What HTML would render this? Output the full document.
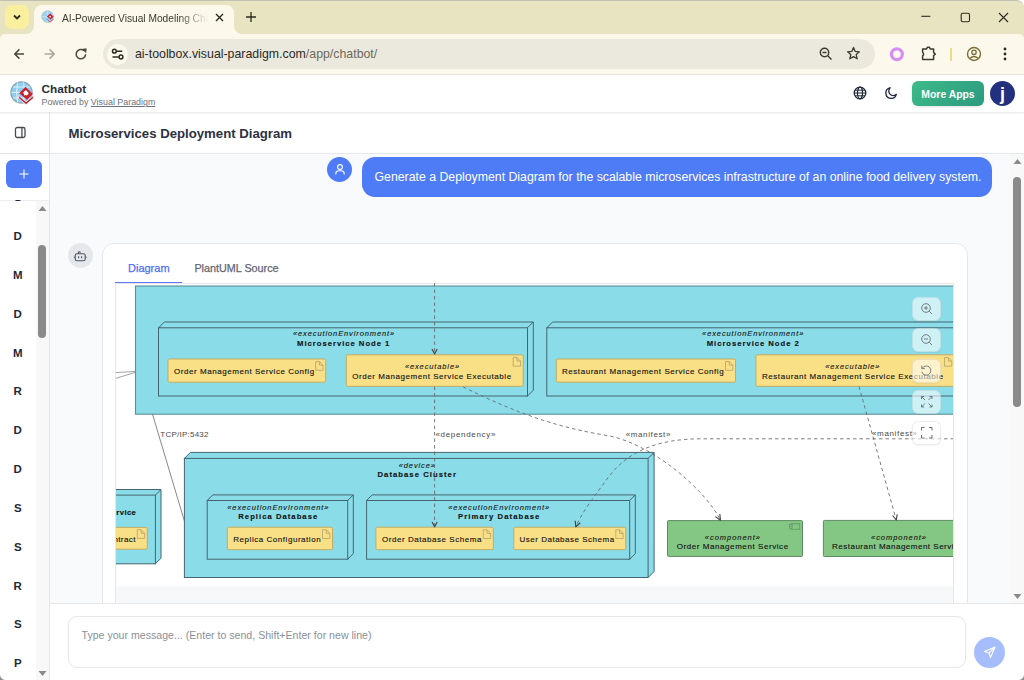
<!DOCTYPE html>
<html><head><meta charset="utf-8">
<style>
*{box-sizing:border-box;margin:0;padding:0}
html,body{width:1024px;height:680px;overflow:hidden;background:#fff;font-family:"Liberation Sans",sans-serif}
.abs{position:absolute}
#tabstrip{left:0;top:0;width:1024px;height:34px;background:#e8e4c2;border-top:1px solid #c2c0b2;border-radius:0 8px 0 0}
#toolbar{left:0;top:34px;width:1024px;height:41px;background:#fcf9ec;border-bottom:1px solid #e5e2d3;border-radius:5px 5px 0 0}
#apphdr{left:0;top:75px;width:1024px;height:37px;background:#fff;box-shadow:0 1px 2px rgba(0,0,0,.10);z-index:3}
#sidebar{left:0;top:112px;width:50px;height:568px;background:#fff;border-right:1px solid #e5e7eb}
#main{left:50px;top:112px;width:974px;height:491px;background:#f9fafb}
#titlebar{left:50px;top:112px;width:974px;height:42px;background:#fff;border-bottom:1px solid #e5e7eb}
#inputbar{left:50px;top:603px;width:974px;height:77px;background:#fff;border-top:1px solid #e5e7eb}
.letter{position:absolute;left:0;width:35.5px;text-align:center;font-weight:bold;font-size:11.5px;line-height:11.5px;color:#1f2937}
</style></head><body>

<!-- TAB STRIP -->
<div id="tabstrip" class="abs"></div>
<div class="abs" style="left:5px;top:5px;width:24px;height:24px;border-radius:7px;background:#f9ef9f"></div>
<svg class="abs" style="left:11px;top:11px" width="12" height="12" viewBox="0 0 12 12"><path d="M3 4.5 L6 7.5 L9 4.5" fill="none" stroke="#2b2a1f" stroke-width="1.8"/></svg>
<div class="abs" style="left:34px;top:5px;width:200px;height:30px;background:#fcf9ec;border-radius:8px 8px 0 0"></div>
<div class="abs" style="left:26px;top:26px;width:8px;height:9px;background:#fcf9ec"></div>
<div class="abs" style="left:26px;top:26px;width:8px;height:8px;border-radius:0 0 8px 0;background:#e8e4c2"></div>
<div class="abs" style="left:234px;top:26px;width:8px;height:9px;background:#fcf9ec"></div>
<div class="abs" style="left:234px;top:26px;width:8px;height:8px;border-radius:0 0 0 8px;background:#e8e4c2"></div>
<!-- favicon -->
<svg class="abs" style="left:40px;top:9px" width="16" height="16" viewBox="40 9 16 16"><circle cx="47.6" cy="16.6" r="5.8" fill="#9bd3f3" stroke="#a9bcc6" stroke-width=".8"/><path d="M42.3 16.6 H52.9 M47.6 11 V22.2" stroke="#d9eefa" stroke-width=".6"/><path d="M50.2,13.4 L53.6,16.8 L50.6,19.6 L46.8,16.6 Z" fill="#c8202f"/><path d="M46.8,18.4 L50.2,21.6 L53.6,18.4 L53.6,19.6 L50.2,22.6 L46.8,19.6 Z" fill="#d84a55"/><circle cx="50.1" cy="16.6" r=".9" fill="#fff"/></svg>
<div class="abs" style="left:62px;top:13.9px;width:146px;height:14px;font-size:10.2px;line-height:10.2px;color:#3b3a2f;white-space:nowrap;overflow:hidden;-webkit-mask-image:linear-gradient(90deg,#000 80%,transparent 100%)">AI-Powered Visual Modeling Chatbot</div>
<svg class="abs" style="left:214px;top:12px" width="11" height="11" viewBox="0 0 11 11"><path d="M2 2 L9 9 M9 2 L2 9" stroke="#2b2a1f" stroke-width="1.4"/></svg>
<svg class="abs" style="left:245px;top:11px" width="12" height="12" viewBox="0 0 12 12"><path d="M6 1 V11 M1 6 H11" stroke="#2b2a1f" stroke-width="1.3"/></svg>
<!-- window controls -->
<svg class="abs" style="left:919.5px;top:10px" width="12" height="12" viewBox="0 0 12 12"><path d="M1.3 6.3 H10.3" stroke="#2b2a1f" stroke-width="1.1"/></svg>
<svg class="abs" style="left:959.5px;top:12px" width="11" height="11" viewBox="0 0 11 11"><rect x="1.2" y="1.2" width="8.3" height="8.6" rx="1.5" fill="none" stroke="#2b2a1f" stroke-width="1.1"/></svg>
<svg class="abs" style="left:998px;top:12px" width="11" height="11" viewBox="0 0 11 11"><path d="M1 1 L10 10 M10 1 L1 10" stroke="#2b2a1f" stroke-width="1.1"/></svg>

<!-- TOOLBAR -->
<div class="abs" style="left:0;top:34px;width:1024px;height:6px;background:#e8e4c2"></div>
<div class="abs" style="left:26px;top:34px;width:216px;height:6px;background:#fcf9ec"></div>
<div id="toolbar" class="abs"></div>
<svg class="abs" style="left:10px;top:44px" width="50" height="20" viewBox="10 44 50 20"><path d="M24 54 H15 M19.4 49.4 L14.8 54 L19.4 58.6" fill="none" stroke="#4a4a38" stroke-width="1.5"/><path d="M44.6 54 H54 M49.6 49.4 L54.2 54 L49.6 58.6" fill="none" stroke="#aaa897" stroke-width="1.5"/></svg>

<svg class="abs" style="left:72px;top:44px" width="20" height="20" viewBox="72 44 20 20"><path d="M85.6 54.3 A4.7 4.7 0 1 1 84 50.6" fill="none" stroke="#4a4a38" stroke-width="1.5"/><path d="M82.6 49.2 L86.2 48.8 L85.8 52.6 Z" fill="#4a4a38" stroke="#4a4a38" stroke-width=".8" stroke-linejoin="round"/></svg>
<div class="abs" style="left:103px;top:39px;width:772px;height:30px;border-radius:15px;background:#ebe8de"></div>
<div class="abs" style="left:107px;top:44px;width:21px;height:21px;border-radius:50%;background:#fcf9ec"></div>
<svg class="abs" style="left:107px;top:44px" width="21" height="21" viewBox="107 44 21 21"><circle cx="114.4" cy="51.2" r="1.9" fill="none" stroke="#2e2d24" stroke-width="1.5"/><path d="M117 51.2 H122.3 M112.5 57 H118.8" stroke="#2e2d24" stroke-width="1.5"/><circle cx="121" cy="57" r="1.9" fill="none" stroke="#2e2d24" stroke-width="1.5"/></svg>
<div class="abs" style="left:135px;top:48.35px;font-size:12.35px;line-height:12.35px;color:#2b2a1f;white-space:nowrap">ai-toolbox.visual-paradigm.com<span style="color:#6c6a5c">/app/chatbot/</span></div>
<svg class="abs" style="left:819px;top:47px" width="14" height="14" viewBox="0 0 14 14"><circle cx="5.5" cy="5.5" r="4.2" fill="none" stroke="#3b3a2f" stroke-width="1.4"/><path d="M3.5 5.5 H7.5 M8.7 8.7 L12.5 12.5" stroke="#3b3a2f" stroke-width="1.4"/></svg>
<svg class="abs" style="left:846px;top:46px" width="15" height="15" viewBox="0 0 15 15"><path d="M7.5 1.5 L9.2 5.4 L13.4 5.8 L10.2 8.6 L11.2 12.8 L7.5 10.6 L3.8 12.8 L4.8 8.6 L1.6 5.8 L5.8 5.4Z" fill="none" stroke="#3b3a2f" stroke-width="1.3" stroke-linejoin="round"/></svg>
<svg class="abs" style="left:886px;top:44px" width="22" height="22" viewBox="886 44 22 22"><circle cx="896.9" cy="54.2" r="5.4" fill="none" stroke="#d68ef2" stroke-width="3.3"/></svg>
<svg class="abs" style="left:918px;top:44px" width="22" height="20" viewBox="918 44 22 20"><path d="M922.6,49 H926.4 L927.6,47.2 H929.2 L930.4,49 H933.6 V52.6 L935.4,54 L933.6,55.6 V59.4 H922.6 V55.9 Q924.6,54.2 922.6,52.3 Z" fill="none" stroke="#3b3a2f" stroke-width="1.5" stroke-linejoin="round"/></svg>
<div class="abs" style="left:950.2px;top:47.5px;width:1.6px;height:13.3px;background:#ebdc8a"></div>
<svg class="abs" style="left:966px;top:46px" width="16" height="16" viewBox="0 0 16 16"><circle cx="8" cy="8" r="6.5" fill="none" stroke="#7a6e33" stroke-width="1.4"/><circle cx="8" cy="6.3" r="2.2" fill="none" stroke="#7a6e33" stroke-width="1.3"/><path d="M4 12.3 Q8 8.8 12 12.3" fill="none" stroke="#7a6e33" stroke-width="1.3"/></svg>
<svg class="abs" style="left:1002px;top:46px" width="6" height="16" viewBox="0 0 6 16"><circle cx="3" cy="3" r="1.4" fill="#2b2a1f"/><circle cx="3" cy="8" r="1.4" fill="#2b2a1f"/><circle cx="3" cy="13" r="1.4" fill="#2b2a1f"/></svg>

<!-- APP HEADER -->
<div id="apphdr" class="abs">
  <svg class="abs" style="left:-75px;top:-75px" width="150" height="150" viewBox="0 0 150 150"><g transform="translate(75,0)"><circle cx="21.5" cy="92.5" r="10.6" fill="#8fcdf2" stroke="#8da7b3" stroke-width="1.3"/><path d="M11.5 92.5 H31.5 M13 87 H30 M13 98 H30 M17.6 82.5 Q15.5 92.5 17.6 102.5 M23.5 82.2 Q25.8 92.5 23.5 102.8" fill="none" stroke="#e6f4fc" stroke-width=".9"/><path d="M25.5,86.8 L32.8,94 L27,99.8 L19.2,93.2 Z" fill="#c8202f"/><path d="M18.6,95.4 L26,101.9 L33.4,95.4 L33.4,98.3 L26,104.6 L18.6,98.3 Z" fill="#c8202f" stroke="#fff" stroke-width=".7"/><path d="M23.2,92.6 L25.8,90 L28.3,92.5 Q29,93.5 28,94.4 L26.6,95.6 L25.6,94.8 L24.6,95.8 Z" fill="#fff"/></g></svg>
  <div class="abs" style="left:41.5px;top:9px;font-size:11.8px;line-height:11.8px;font-weight:bold;color:#2a2f3d">Chatbot</div>
  <div class="abs" style="left:41.5px;top:23.3px;font-size:8.9px;line-height:8.9px;color:#6b7280;white-space:nowrap">Powered by <span style="text-decoration:underline">Visual Paradigm</span></div>
  <svg class="abs" style="left:853px;top:11px" width="14" height="14" viewBox="0 0 14 14"><circle cx="7" cy="7" r="5.8" fill="none" stroke="#1f2937" stroke-width="1.3"/><ellipse cx="7" cy="7" rx="2.5" ry="5.8" fill="none" stroke="#1f2937" stroke-width="1.2"/><path d="M1.2 7 H12.8 M2 4.2 H12 M2 9.8 H12" stroke="#1f2937" stroke-width="1"/></svg>
  <svg class="abs" style="left:884px;top:11px" width="14" height="14" viewBox="0 0 14 14"><path d="M6.2 1.8 A5.3 5.3 0 1 0 12.3 8.3 A4.3 4.3 0 0 1 6.2 1.8Z" fill="none" stroke="#1f2937" stroke-width="1.3" stroke-linejoin="round"/></svg>
  <div class="abs" style="left:912px;top:6px;width:72px;height:25px;border-radius:6px;background:linear-gradient(135deg,#3dbb88,#2c9a80);box-shadow:0 1px 3px rgba(0,0,0,.12);color:#fff;font-size:10.4px;font-weight:bold;text-align:center;line-height:27px;letter-spacing:0">More Apps</div>
  <div class="abs" style="left:990px;top:6px;width:25px;height:25px;border-radius:50%;background:#23307e;color:#fff;font-size:18px;font-weight:bold;text-align:center;line-height:27px">j</div>
</div>

<!-- SIDEBAR -->
<div id="sidebar" class="abs"></div>
<svg class="abs" style="left:13.5px;top:126.3px" width="13" height="13" viewBox="0 0 13 13"><rect x="1.5" y="1.5" width="9.5" height="10" rx="1.8" fill="none" stroke="#474b52" stroke-width="1.3"/><path d="M7.9 1.5 V11.5" stroke="#474b52" stroke-width="1.3"/></svg>
<div class="abs" style="left:0;top:153px;width:49px;height:1px;background:#e5e7eb"></div>
<div class="abs" style="left:6px;top:160px;width:36px;height:28px;border-radius:6px;background:#4f7cf6"></div>
<svg class="abs" style="left:18px;top:168px" width="12" height="12" viewBox="0 0 12 12"><path d="M6 1.5 V10.5 M1.5 6 H10.5" stroke="#fff" stroke-width="1.1"/></svg>
<div class="abs" style="left:0;top:200px;width:49px;height:1px;background:#eceef1"></div>
<div class="abs" style="left:0;top:200px;width:36px;height:480px;overflow:hidden">
  <div class="letter" style="top:-7.88px">S</div>
  <div class="letter" style="top:30.97px">D</div>
  <div class="letter" style="top:69.82px">M</div>
  <div class="letter" style="top:108.67px">D</div>
  <div class="letter" style="top:147.52px">M</div>
  <div class="letter" style="top:186.37px">R</div>
  <div class="letter" style="top:225.22px">D</div>
  <div class="letter" style="top:264.07px">D</div>
  <div class="letter" style="top:302.92px">S</div>
  <div class="letter" style="top:341.77px">S</div>
  <div class="letter" style="top:380.62px">R</div>
  <div class="letter" style="top:419.47px">S</div>
  <div class="letter" style="top:458.32px">P</div>
</div>
<div class="abs" style="left:36px;top:201px;width:13px;height:479px;background:#f8f8f8"></div>
<svg class="abs" style="left:37px;top:204px" width="11" height="8" viewBox="0 0 11 8"><path d="M1.5 7 L5.5 2 L9.5 7Z" fill="#8a8a8a"/></svg>
<div class="abs" style="left:38px;top:245px;width:8px;height:93px;border-radius:4px;background:#8a8a8a"></div>
<svg class="abs" style="left:37px;top:669.5px" width="11" height="8" viewBox="0 0 11 8"><path d="M1.5 1 L5.5 6 L9.5 1Z" fill="#8a8a8a"/></svg>

<!-- MAIN -->
<div id="main" class="abs"></div>
<div id="titlebar" class="abs"><div class="abs" style="left:18.5px;top:14.9px;font-size:13.2px;line-height:13.2px;font-weight:bold;color:#2d3142;white-space:nowrap">Microservices Deployment Diagram</div></div>

<!-- user message -->
<div class="abs" style="left:327px;top:157px;width:25px;height:25px;border-radius:50%;background:#4f7cf6"></div>
<svg class="abs" style="left:334px;top:163px" width="12" height="13" viewBox="0 0 12 13"><circle cx="6" cy="4" r="2.4" fill="none" stroke="#fff" stroke-width="1.1"/><path d="M1.8 11.5 V10.5 A3 3 0 0 1 4.8 7.8 H7.2 A3 3 0 0 1 10.2 10.5 V11.5" fill="none" stroke="#fff" stroke-width="1.1"/></svg>
<div class="abs" style="left:362px;top:157px;width:630px;height:40px;border-radius:13px;background:#4e7bf6;color:#fff;font-size:12.3px;line-height:40px;padding-left:12.5px;white-space:nowrap">Generate a Deployment Diagram for the scalable microservices infrastructure of an online food delivery system.</div>

<!-- bot avatar -->
<div class="abs" style="left:68px;top:243px;width:25px;height:25px;border-radius:50%;background:#e5e7eb"></div>
<svg class="abs" style="left:68px;top:243px" width="25" height="25" viewBox="68 243 25 25"><rect x="75.2" y="253.8" width="10" height="6.9" rx="1.8" fill="none" stroke="#4b5563" stroke-width="1.1"/><path d="M78.3 253.8 V252.6 Q78.6 251.6 79.6 251.8 L80.6 252.6 M78.6 256.2 V258.2 M81.6 256.2 V258.2 M73.8 257.2 H75.2 M85.2 257.2 H86.6" fill="none" stroke="#4b5563" stroke-width="1.1"/></svg>

<!-- card -->
<div class="abs" style="left:102px;top:243px;width:866px;height:400px;border-radius:12px;background:#fff;border:1px solid #e5e7eb"></div>
<div class="abs" style="left:128px;top:263.2px;font-size:11px;line-height:11px;color:#4f6ef7;-webkit-text-stroke:.25px #4f6ef7">Diagram</div>
<div class="abs" style="left:194.4px;top:263.4px;font-size:10.8px;line-height:10.8px;color:#5f6673;-webkit-text-stroke:.25px #5f6673">PlantUML Source</div>
<div class="abs" style="left:115px;top:281.5px;width:67px;height:1.6px;background:#5b78f7"></div>
<div class="abs" style="left:115px;top:283px;width:839px;height:330px;background:#f7f8fa;border-left:1px solid #e5e7eb;border-right:1px solid #e5e7eb"></div>
<div id="diagram" class="abs" style="left:116px;top:283px;width:837px;height:303px;background:#fff;overflow:hidden"></div>
<svg class="abs" style="left:116px;top:283px" width="837" height="303" viewBox="116 283 837 303" font-family="Liberation Sans, sans-serif"><rect x="135.5" y="286" width="900" height="128.2" fill="#8adde8" stroke="#5a8f9a" stroke-width="1.1"/>
<rect x="116" y="283" width="837" height="1" fill="#e5e7eb"/>
<path d="M116,372.6 L135.5,371.4 M116,378.3 L135.5,372.3" stroke="#8c8c8c" stroke-width=".8" fill="none"/>
<path d="M158.5,327.8 L164.3,322.0 L533.3,322.0 L533.3,390.2 L527.5,396 Z" fill="#8adde8" stroke="#46646f" stroke-width="1"/>
<rect x="158.5" y="327.8" width="369.0" height="68.19999999999999" fill="#8adde8" stroke="#46646f" stroke-width="1"/>
<path d="M527.5,327.8 L533.3,322.0" stroke="#46646f" stroke-width="1"/>
<text x="293" y="336.4" font-size="7.5" font-style="italic" textLength="101.2" lengthAdjust="spacing" fill="#141414" stroke="#141414" stroke-width="0.1">&#171;executionEnvironment&#187;</text>
<text x="297" y="346.2" font-size="7.7" font-weight="bold" textLength="92.4" lengthAdjust="spacing" fill="#141414" stroke="#141414" stroke-width="0.14">Microservice Node 1</text>
<rect x="168" y="359" width="157.7" height="23.19999999999999" rx="1.5" fill="#f9df86" stroke="#c2ab63" stroke-width="1"/>
<path d="M315.7,361.6 H319.5 L323.0,365.20000000000005 V370.3 H315.7 Z M319.5,361.6 V365.20000000000005 H323.0" fill="none" stroke="#b6a56e" stroke-width=".85"/>
<text x="174.1" y="374" font-size="8" textLength="140.0" lengthAdjust="spacing" fill="#141414" stroke="#141414" stroke-width="0.13">Order Management Service Config</text>
<rect x="346.3" y="354.8" width="176.90000000000003" height="31.5" rx="1.5" fill="#f9df86" stroke="#c2ab63" stroke-width="1"/>
<path d="M513.2,357.40000000000003 H517.0 L520.5,361.00000000000006 V366.1 H513.2 Z M517.0,357.40000000000003 V361.00000000000006 H520.5" fill="none" stroke="#b6a56e" stroke-width=".85"/>
<text x="404.9" y="369.2" font-size="7.5" font-style="italic" textLength="54.2" lengthAdjust="spacing" fill="#141414" stroke="#141414" stroke-width="0.1">&#171;executable&#187;</text>
<text x="352.2" y="378.7" font-size="8" textLength="158.9" lengthAdjust="spacing" fill="#141414" stroke="#141414" stroke-width="0.13">Order Management Service Executable</text>
<path d="M546.8,327.8 L552.5999999999999,322.0 L967.8,322.0 L967.8,390.2 L962,396 Z" fill="#8adde8" stroke="#46646f" stroke-width="1"/>
<rect x="546.8" y="327.8" width="415.20000000000005" height="68.19999999999999" fill="#8adde8" stroke="#46646f" stroke-width="1"/>
<path d="M962,327.8 L967.8,322.0" stroke="#46646f" stroke-width="1"/>
<text x="702.1" y="336.4" font-size="7.5" font-style="italic" textLength="101.2" lengthAdjust="spacing" fill="#141414" stroke="#141414" stroke-width="0.1">&#171;executionEnvironment&#187;</text>
<text x="706.7" y="346.2" font-size="7.7" font-weight="bold" textLength="92.1" lengthAdjust="spacing" fill="#141414" stroke="#141414" stroke-width="0.14">Microservice Node 2</text>
<rect x="556.3" y="359" width="179.20000000000005" height="23.19999999999999" rx="1.5" fill="#f9df86" stroke="#c2ab63" stroke-width="1"/>
<path d="M725.5,361.6 H729.3 L732.8,365.20000000000005 V370.3 H725.5 Z M729.3,361.6 V365.20000000000005 H732.8" fill="none" stroke="#b6a56e" stroke-width=".85"/>
<text x="562" y="374" font-size="8" textLength="161.6" lengthAdjust="spacing" fill="#141414" stroke="#141414" stroke-width="0.13">Restaurant Management Service Config</text>
<rect x="755.9" y="354.8" width="244.10000000000002" height="31.5" rx="1.5" fill="#f9df86" stroke="#c2ab63" stroke-width="1"/>
<text x="825.2" y="369.2" font-size="7.5" font-style="italic" textLength="54.3" lengthAdjust="spacing" fill="#141414" stroke="#141414" stroke-width="0.1">&#171;executable&#187;</text>
<text x="761.9" y="378.7" font-size="8" textLength="181.2" lengthAdjust="spacing" fill="#141414" stroke="#141414" stroke-width="0.13">Restaurant Management Service Executable</text>
<path d="M944.5,357.5 H948.3 L951.8,361.1 V366.2 H944.5 Z M948.3,357.5 V361.1 H951.8" fill="none" stroke="#b6a56e" stroke-width=".85"/>
<path d="M184.4,458.4 L190.4,452.4 L654.1,452.4 L654.1,571.5 L648.1,577.5 Z" fill="#8adde8" stroke="#46646f" stroke-width="1"/>
<rect x="184.4" y="458.4" width="463.70000000000005" height="119.10000000000002" fill="#8adde8" stroke="#46646f" stroke-width="1"/>
<path d="M648.1,458.4 L654.1,452.4" stroke="#46646f" stroke-width="1"/>
<text x="398.7" y="467.6" font-size="7.5" font-style="italic" textLength="36.3" lengthAdjust="spacing" fill="#141414" stroke="#141414" stroke-width="0.1">&#171;device&#187;</text>
<text x="377.5" y="476.9" font-size="7.7" font-weight="bold" textLength="78.4" lengthAdjust="spacing" fill="#141414" stroke="#141414" stroke-width="0.14">Database Cluster</text>
<path d="M40,495.1 L45.6,489.5 L161.0,489.5 L161.0,558.1999999999999 L155.4,563.8 Z" fill="#8adde8" stroke="#46646f" stroke-width="1"/>
<rect x="40" y="495.1" width="115.4" height="68.69999999999993" fill="#8adde8" stroke="#46646f" stroke-width="1"/>
<path d="M155.4,495.1 L161.0,489.5" stroke="#46646f" stroke-width="1"/>
<text x="136.3" y="514.6" font-size="7.7" font-weight="bold" text-anchor="end" letter-spacing="0.4" fill="#141414" stroke="#141414" stroke-width="0.14">Contract Service</text>
<rect x="40" y="527.4" width="107.30000000000001" height="21.800000000000068" rx="1.5" fill="#f9df86" stroke="#c2ab63" stroke-width="1"/>
<path d="M137.3,529.7 H141.10000000000002 L144.60000000000002,533.3000000000001 V538.4000000000001 H137.3 Z M141.10000000000002,529.7 V533.3000000000001 H144.60000000000002" fill="none" stroke="#b6a56e" stroke-width=".85"/>
<text x="135.8" y="542.2" font-size="8" text-anchor="end" letter-spacing="0.4" fill="#141414" stroke="#141414" stroke-width="0.13">Payment Contract</text>
<path d="M207.2,500.5 L212.79999999999998,494.9 L353.3,494.9 L353.3,553.6 L347.7,559.2 Z" fill="#8adde8" stroke="#46646f" stroke-width="1"/>
<rect x="207.2" y="500.5" width="140.5" height="58.700000000000045" fill="#8adde8" stroke="#46646f" stroke-width="1"/>
<path d="M347.7,500.5 L353.3,494.9" stroke="#46646f" stroke-width="1"/>
<text x="227.3" y="509.5" font-size="7.5" font-style="italic" textLength="101.1" lengthAdjust="spacing" fill="#141414" stroke="#141414" stroke-width="0.1">&#171;executionEnvironment&#187;</text>
<text x="238.3" y="519.2" font-size="7.7" font-weight="bold" textLength="78.9" lengthAdjust="spacing" fill="#141414" stroke="#141414" stroke-width="0.14">Replica Database</text>
<rect x="227.3" y="527.2" width="105.19999999999999" height="22.5" rx="1.5" fill="#f9df86" stroke="#c2ab63" stroke-width="1"/>
<path d="M322.5,529.8000000000001 H326.3 L329.8,533.4000000000001 V538.5000000000001 H322.5 Z M326.3,529.8000000000001 V533.4000000000001 H329.8" fill="none" stroke="#b6a56e" stroke-width=".85"/>
<text x="233.3" y="542" font-size="8" textLength="87.3" lengthAdjust="spacing" fill="#141414" stroke="#141414" stroke-width="0.13">Replica Configuration</text>
<path d="M366.6,500.5 L372.20000000000005,494.9 L635.3000000000001,494.9 L635.3000000000001,553.6 L629.7,559.2 Z" fill="#8adde8" stroke="#46646f" stroke-width="1"/>
<rect x="366.6" y="500.5" width="263.1" height="58.700000000000045" fill="#8adde8" stroke="#46646f" stroke-width="1"/>
<path d="M629.7,500.5 L635.3000000000001,494.9" stroke="#46646f" stroke-width="1"/>
<text x="448.3" y="509.5" font-size="7.5" font-style="italic" textLength="100.9" lengthAdjust="spacing" fill="#141414" stroke="#141414" stroke-width="0.1">&#171;executionEnvironment&#187;</text>
<text x="458" y="519.2" font-size="7.7" font-weight="bold" textLength="81.4" lengthAdjust="spacing" fill="#141414" stroke="#141414" stroke-width="0.14">Primary Database</text>
<rect x="375.9" y="527.2" width="117.40000000000003" height="22.5" rx="1.5" fill="#f9df86" stroke="#c2ab63" stroke-width="1"/>
<path d="M483.3,529.8000000000001 H487.1 L490.6,533.4000000000001 V538.5000000000001 H483.3 Z M487.1,529.8000000000001 V533.4000000000001 H490.6" fill="none" stroke="#b6a56e" stroke-width=".85"/>
<text x="381.9" y="542" font-size="8" textLength="99.5" lengthAdjust="spacing" fill="#141414" stroke="#141414" stroke-width="0.13">Order Database Schema</text>
<rect x="513.8" y="527.2" width="112.0" height="22.5" rx="1.5" fill="#f9df86" stroke="#c2ab63" stroke-width="1"/>
<path d="M615.8,529.8000000000001 H619.5999999999999 L623.0999999999999,533.4000000000001 V538.5000000000001 H615.8 Z M619.5999999999999,529.8000000000001 V533.4000000000001 H623.0999999999999" fill="none" stroke="#b6a56e" stroke-width=".85"/>
<text x="519.5" y="542" font-size="8" textLength="94.6" lengthAdjust="spacing" fill="#141414" stroke="#141414" stroke-width="0.13">User Database Schema</text>
<rect x="667.5" y="520.6" width="135.0" height="35.799999999999955" rx="1" fill="#84c784" stroke="#5d8a62" stroke-width="1"/>
<rect x="791" y="523.8" width="8.8" height="5.4" fill="none" stroke="#5d8a62" stroke-width=".7"/><rect x="789.7" y="524.7" width="2.6" height="1.4" fill="#84c784" stroke="#5d8a62" stroke-width=".5"/><rect x="789.7" y="526.9" width="2.6" height="1.4" fill="#84c784" stroke="#5d8a62" stroke-width=".5"/>
<text x="704.8" y="539.7" font-size="7.5" font-style="italic" textLength="55.2" lengthAdjust="spacing" fill="#141414" stroke="#141414" stroke-width="0.1">&#171;component&#187;</text>
<text x="676.7" y="549" font-size="8" textLength="111.4" lengthAdjust="spacing" fill="#141414" stroke="#141414" stroke-width="0.13">Order Management Service</text>
<rect x="823.4" y="520.4" width="176.60000000000002" height="36.10000000000002" rx="1" fill="#84c784" stroke="#5d8a62" stroke-width="1"/>
<text x="871" y="539.5" font-size="7.5" font-style="italic" textLength="55" lengthAdjust="spacing" fill="#141414" stroke="#141414" stroke-width="0.1">&#171;component&#187;</text>
<text x="832" y="549" font-size="8" textLength="131" lengthAdjust="spacing" fill="#141414" stroke="#141414" stroke-width="0.13">Restaurant Management Service</text>
<path d="M434.6,283 V353.5" stroke="#666" stroke-width=".85" stroke-dasharray="3.5,3" fill="none"/>
<path d="M432,349 L434.6,354 L437.2,349" stroke="#454545" stroke-width="1.15" fill="none" stroke-linejoin="round"/>
<path d="M434.6,386.5 V526.5" stroke="#666" stroke-width=".85" stroke-dasharray="3.5,3" fill="none"/>
<path d="M432.1,522 L434.6,526.8 L437.2,522" stroke="#454545" stroke-width="1.15" fill="none" stroke-linejoin="round"/>
<path d="M152.5,414.2 L184.4,521" stroke="#6a6a6a" stroke-width=".8" fill="none"/>
<path d="M463,386.8 C520,415 560,428 610,436 C655,446 705,490 720.3,519.8" stroke="#666" stroke-width=".85" stroke-dasharray="3.5,3" fill="none"/>
<path d="M715.3,516.6 L720.5,520.2 L719.8,514" stroke="#454545" stroke-width="1.15" fill="none" stroke-linejoin="round"/>
<path d="M954,438.8 L700,438.8 C660,439 630,450 610,475 C596,494 582,512 575.9,526.7" stroke="#666" stroke-width=".85" stroke-dasharray="3.5,3" fill="none"/>
<path d="M575.2,520.8 L575.8,526.8 L580.3,522.8" stroke="#454545" stroke-width="1.15" fill="none" stroke-linejoin="round"/>
<path d="M859,386.5 L896.2,519.8" stroke="#666" stroke-width=".85" stroke-dasharray="3.5,3" fill="none"/>
<path d="M892.6,515.5 L896.3,520 L897.2,514.4" stroke="#454545" stroke-width="1.15" fill="none" stroke-linejoin="round"/>
<text x="160.3" y="437" font-size="8" textLength="48.2" lengthAdjust="spacing" fill="#4a4a4a" stroke="#4a4a4a" stroke-width="0">TCP/IP:5432</text>
<text x="435.5" y="436.8" font-size="8" textLength="59.9" lengthAdjust="spacing" fill="#4a4a4a" stroke="#4a4a4a" stroke-width="0">&#171;dependency&#187;</text>
<text x="625.7" y="436.8" font-size="8" textLength="44.7" lengthAdjust="spacing" fill="#4a4a4a" stroke="#4a4a4a" stroke-width="0">&#171;manifest&#187;</text>
<text x="872" y="436.3" font-size="8" textLength="45" lengthAdjust="spacing" fill="#4a4a4a" stroke="#4a4a4a" stroke-width="0">&#171;manifest&#187;</text></svg>
<div class="abs" style="left:912px;top:297px;width:29px;height:24px;border-radius:6px;background:rgba(255,255,255,.58);border:1px solid rgba(0,0,0,.07);box-shadow:0 1px 2px rgba(0,0,0,.06)"></div>
<svg class="abs" style="left:919.5px;top:302px" width="14" height="14" viewBox="0 0 14 14"><circle cx="6" cy="6" r="4.3" fill="none" stroke="#6b6f75" stroke-width=".9"/><path d="M9.2 9.2 L12 12 M4 6 H8 M6 4 V8" stroke="#6b6f75" stroke-width=".9"/></svg>
<div class="abs" style="left:912px;top:328px;width:29px;height:24px;border-radius:6px;background:rgba(255,255,255,.58);border:1px solid rgba(0,0,0,.07);box-shadow:0 1px 2px rgba(0,0,0,.06)"></div>
<svg class="abs" style="left:919.5px;top:333px" width="14" height="14" viewBox="0 0 14 14"><circle cx="6" cy="6" r="4.3" fill="none" stroke="#6b6f75" stroke-width=".9"/><path d="M9.2 9.2 L12 12 M4 6 H8" stroke="#6b6f75" stroke-width=".9"/></svg>
<div class="abs" style="left:912px;top:359px;width:29px;height:24px;border-radius:6px;background:rgba(255,255,255,.58);border:1px solid rgba(0,0,0,.07);box-shadow:0 1px 2px rgba(0,0,0,.06)"></div>
<svg class="abs" style="left:919.5px;top:364px" width="14" height="14" viewBox="0 0 14 14"><path d="M2.3 4.2 A4.6 4.6 0 1 1 1.8 7.8" fill="none" stroke="#6b6f75" stroke-width=".9"/><path d="M1.8 1.6 V4.6 H4.8" fill="none" stroke="#6b6f75" stroke-width=".9"/></svg>
<div class="abs" style="left:912px;top:390px;width:29px;height:24px;border-radius:6px;background:rgba(255,255,255,.58);border:1px solid rgba(0,0,0,.07);box-shadow:0 1px 2px rgba(0,0,0,.06)"></div>
<svg class="abs" style="left:919.5px;top:395px" width="14" height="14" viewBox="0 0 14 14"><path d="M1.5 1.5 L5 5 M1.5 1.5 V4 M1.5 1.5 H4 M12 1.5 L8.5 5 M12 1.5 V4 M12 1.5 H9.5 M1.5 12 L5 8.5 M1.5 12 V9.5 M1.5 12 H4 M12 12 L8.5 8.5 M12 12 V9.5 M12 12 H9.5" fill="none" stroke="#6b6f75" stroke-width=".9"/></svg>
<div class="abs" style="left:912px;top:421px;width:29px;height:24px;border-radius:6px;background:rgba(255,255,255,.58);border:1px solid rgba(0,0,0,.07);box-shadow:0 1px 2px rgba(0,0,0,.06)"></div>
<svg class="abs" style="left:919.5px;top:426px" width="14" height="14" viewBox="0 0 14 14"><path d="M1.5 4.5 V1.5 H4.5 M9 1.5 H12 V4.5 M12 9 V12 H9 M4.5 12 H1.5 V9" fill="none" stroke="#6b6f75" stroke-width="1"/></svg>

<!-- right scrollbar -->
<div class="abs" style="left:1010px;top:154px;width:14px;height:449px;background:#f8f8f8"></div>
<svg class="abs" style="left:1012px;top:157px" width="11" height="8" viewBox="0 0 11 8"><path d="M1.5 7 L5.5 2 L9.5 7Z" fill="#8a8a8a"/></svg>
<div class="abs" style="left:1013px;top:177px;width:8px;height:230px;border-radius:4px;background:#8a8a8a"></div>
<svg class="abs" style="left:1012px;top:593px" width="11" height="8" viewBox="0 0 11 8"><path d="M1.5 1 L5.5 6 L9.5 1Z" fill="#8a8a8a"/></svg>

<!-- input bar -->
<div id="inputbar" class="abs"></div>
<div class="abs" style="left:68px;top:616px;width:898px;height:52px;border-radius:9px;border:1px solid #e5e7eb;background:#fff"></div>
<div class="abs" style="left:81.5px;top:629.6px;font-size:10.6px;line-height:10.6px;color:#8b9099;white-space:nowrap">Type your message... (Enter to send, Shift+Enter for new line)</div>
<div class="abs" style="left:974px;top:637px;width:31px;height:31px;border-radius:50%;background:#a5bdfb"></div>
<svg class="abs" style="left:983px;top:646px" width="13" height="13" viewBox="0 0 13 13"><path d="M12 1 L1.5 5.5 L6 7 L7.5 11.5Z M12 1 L6 7" fill="none" stroke="#fff" stroke-width="1.1" stroke-linejoin="round"/></svg>

<div class="abs" style="left:0;top:674px;width:6px;height:6px;background:radial-gradient(circle at 6px 0,rgba(0,0,0,0) 5.5px,#8c8c8c 6.8px)"></div>
<div class="abs" style="left:1018px;top:674px;width:6px;height:6px;background:radial-gradient(circle at 0 0,rgba(0,0,0,0) 5.5px,#8c8c8c 6.8px)"></div>
</body></html>
